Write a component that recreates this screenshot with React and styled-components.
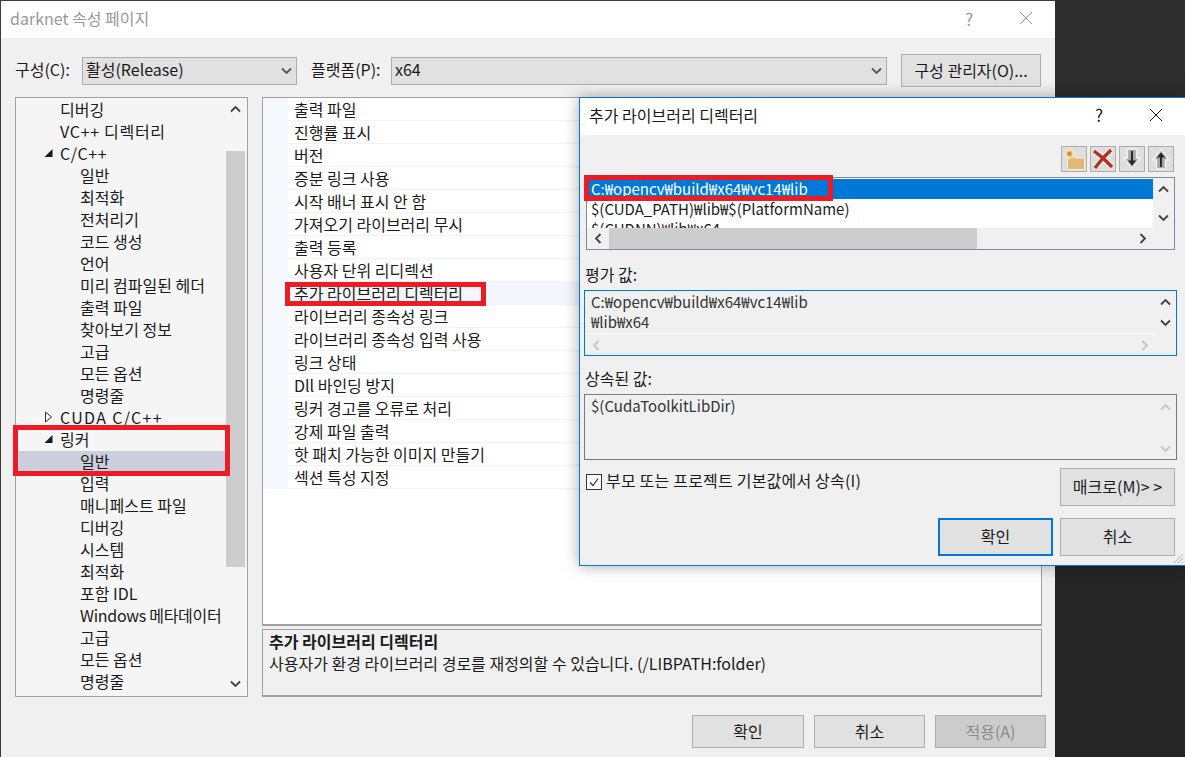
import React from 'react';
import styled, { createGlobalStyle } from 'styled-components';

const GlobalStyle = createGlobalStyle`
  * { box-sizing: border-box; }
  html, body { margin: 0; padding: 0; background: #2d2d2d; }
  body {
    font-family: "Noto Sans CJK KR", "Noto Sans", sans-serif;
    font-size: 16px;
    color: #1a1a1a;
  }
`;

const Desktop = styled.div`
  position: relative;
  width: 1185px;
  height: 757px;
  overflow: hidden;
  background: linear-gradient(#2e2e2e, #262626 70%);
`;

const Window = styled.div`
  display: flex;
  flex-direction: column;
  width: 1055px;
  height: 757px;
  background: #f0f0f0;
  border-top: 1px solid #3c3c3c;
  border-left: 1px solid #3c3c3c;
`;

const TitleBar = styled.div`
  display: flex;
  align-items: center;
  flex: none;
  height: ${p => p.$h}px;
  padding: ${p => p.$pad};
  background: #fff;
`;

const TitleText = styled.div`
  flex: 1;
  color: ${p => (p.$active ? '#1a1a1a' : '#999')};
`;

const HelpMark = styled.div`
  width: 100px;
  font-size: 17px;
  text-align: center;
  color: ${p => (p.$active ? '#1a1a1a' : '#999')};
`;

const CloseMark = styled.svg`
  display: block;
  width: 14px;
  height: 14px;
  stroke: ${p => (p.$active ? '#1a1a1a' : '#999')};
  stroke-width: 1;
  fill: none;
`;

const ConfigRow = styled.div`
  display: flex;
  align-items: center;
  height: 33px;
  margin: 16px 13px 0 14px;
`;

const ConfigLabel = styled.div`
  width: ${p => p.$w}px;
  flex: none;
  padding-bottom: 3px;
`;

const Select = styled.div`
  display: flex;
  align-items: center;
  justify-content: space-between;
  width: ${p => p.$w}px;
  height: 28px;
  margin-right: ${p => p.$mr}px;
  padding: 0 4px 3px 3px;
  background: #e1e1e1;
  border: 1px solid #adadad;

  svg {
    margin-top: 3px;
  }
`;

const Button = styled.div`
  display: flex;
  align-items: center;
  justify-content: center;
  flex: none;
  width: ${p => p.$w}px;
  height: ${p => p.$h}px;
  padding-bottom: 2px;
  background: ${p => (p.$disabled ? '#cccccc' : '#e1e1e1')};
  color: ${p => (p.$disabled ? '#8a8a8a' : '#1a1a1a')};
  border: ${p => (p.$primary ? '2px solid #0078d7' : '1px solid #adadad')};
`;

const Panels = styled.div`
  display: flex;
  gap: 14px;
  margin: 10px 0 0 14px;
  height: 600px;
`;

const Tree = styled.div`
  display: flex;
  width: 233px;
  background: #f5f5f5;
  border: 1px solid #a0a0a0;
`;

const TreeRows = styled.div`
  flex: 1;
  padding-top: 1px;
  overflow: hidden;
`;

const TreeRow = styled.div`
  display: flex;
  align-items: center;
  height: 22px;
  padding-left: ${p => (p.$level === 2 ? 64 : 44)}px;
  padding-bottom: 2px;
  letter-spacing: ${p => p.$track || 0}px;
  background: ${p => (p.$selected ? '#cccedb' : 'transparent')};
  white-space: nowrap;
`;

const Arrow = styled.svg`
  width: 9px;
  height: 12px;
  margin: 0 7px 0 -16px;
  flex: none;
`;

const TreeScroll = styled.div`
  display: flex;
  flex-direction: column;
  width: 19px;
  margin-right: 2px;
  background: #f5f5f5;
`;

const ScrollCap = styled.div`
  display: flex;
  justify-content: center;
  align-items: ${p => (p.$end ? 'flex-end' : 'flex-start')};
  flex: none;
  height: ${p => p.$size}px;
  padding: ${p => (p.$end ? '0 0 7px' : '6px 0 0')};
`;

const ScrollButton = styled.div`
  display: flex;
  align-items: center;
  justify-content: center;
  flex: none;
  width: 22px;
  height: 100%;
`;

const ScrollThumb = styled.div`
  flex: none;
  height: ${p => p.$size}px;
  background: #cdcdcd;
`;

const RightColumn = styled.div`
  display: flex;
  flex-direction: column;
  gap: 3px;
  width: 780px;
`;

const Grid = styled.div`
  flex: none;
  height: 529px;
  background: #fff;
  border: 1px solid #a0a0a0;
  border-bottom-width: 2px;
`;

const GridRow = styled.div`
  display: flex;
  height: 23px;
  background: ${p => (p.$current ? '#f3f6fb' : '#fff')};
`;

const GridGutter = styled.div`
  flex: none;
  width: 25px;
  background: #f5f8fd;
`;

const GridLabel = styled.div`
  flex: 1;
  height: 23px;
  padding-left: 6px;
  line-height: 23px;
  border-bottom: 1px solid #f1f3f8;
`;

const Description = styled.div`
  flex: none;
  height: 68px;
  padding: 0 6px;
  background: #f0f0f0;
  border: 1px solid #a0a0a0;
  border-bottom-width: 2px;
  line-height: 22px;
`;

const DescriptionTitle = styled.div`
  font-weight: 700;
`;

const FooterButtons = styled.div`
  display: flex;
  justify-content: flex-end;
  gap: 10px;
  margin: 18px 9px 0 0;
`;

const Dialog = styled.div`
  position: absolute;
  left: 579px;
  top: 97px;
  display: flex;
  flex-direction: column;
  width: 607px;
  height: 469px;
  background: #f0f0f0;
  border: 1px solid #0078d7;
  box-shadow: 0 0 14px rgba(0, 0, 0, 0.35);
`;

const DialogTools = styled.div`
  display: flex;
  justify-content: flex-end;
  gap: 3px;
  height: 26px;
  margin: 11px 11px 0 0;
`;

const ToolButton = styled.div`
  display: flex;
  align-items: center;
  justify-content: center;
  width: 26px;
  height: 26px;
  background: #dedede;
  border: 1px solid #adadad;
`;

const ListBox = styled.div`
  display: grid;
  grid-template-columns: 1fr 21px;
  grid-template-rows: 50px 21px;
  width: 589px;
  height: 73px;
  margin: 5px 0 0 6px;
  background: #f0f0f0;
  border: 1px solid #828790;
`;

const ListRows = styled.div`
  height: 50px;
  padding-top: 1px;
  overflow: hidden;
  background: #fff;
`;

const ListRow = styled.div`
  height: 20px;
  padding-left: 4px;
  font-size: 15px;
  line-height: 20px;
  white-space: nowrap;
  background: ${p => (p.$selected ? '#0078d7' : 'transparent')};
  color: ${p => (p.$selected ? '#fff' : '#1a1a1a')};
`;

const VerticalBar = styled.div`
  display: flex;
  flex-direction: column;
  align-items: center;
  gap: ${p => p.$gap}px;
  padding-top: ${p => p.$top}px;
`;

const HorizontalBar = styled.div`
  display: flex;
  align-items: center;
  height: 21px;
`;

const HorizontalThumb = styled.div`
  width: ${p => p.$size}px;
  height: 100%;
  background: #cdcdcd;
`;

const HorizontalGap = styled.div`
  flex: 1;
`;

const FieldLabel = styled.div`
  height: 20px;
  margin: ${p => p.$mt}px 0 6px 5px;
  line-height: 20px;
`;

const ValueBox = styled.div`
  display: grid;
  grid-template-columns: 1fr 22px;
  width: 593px;
  height: 66px;
  margin-left: 4px;
  background: #f0f0f0;
  border: 1px solid ${p => (p.$focused ? '#0078d7' : '#7a7a7a')};
`;

const ValueText = styled.div`
  padding: 1px 6px;
  font-size: 15px;
  line-height: 20px;
  white-space: nowrap;
  color: #333;
`;

const ValuePane = styled.div`
  display: flex;
  flex-direction: column;
`;

const ValueLines = styled.div`
  flex: 1;
  border-bottom: 1px solid #fff;
`;

const ValueScroll = styled.div`
  display: flex;
  align-items: center;
  justify-content: space-between;
  height: 22px;
  padding: 0 4px 0 6px;
`;

const OptionRow = styled.div`
  display: flex;
  justify-content: space-between;
  align-items: flex-start;
  margin: 8px 10px 0 6px;
`;

const CheckLabel = styled.div`
  display: flex;
  align-items: center;
  gap: 4px;
  height: 28px;
  padding-bottom: 4px;
  letter-spacing: 0.2px;
`;

const CheckBox = styled.span`
  display: flex;
  align-items: center;
  justify-content: center;
  width: 16px;
  height: 16px;
  margin-top: 3px;
  background: #fff;
  border: 1px solid #333;
`;

const DialogButtons = styled.div`
  display: flex;
  justify-content: flex-end;
  gap: 7px;
  margin: 12px 10px 0 0;
`;

const Grip = styled.svg`
  position: absolute;
  right: 1px;
  bottom: 1px;
  width: 12px;
  height: 12px;
  stroke: #b5b5b5;
`;

const Marker = styled.div`
  position: absolute;
  left: ${p => p.$x}px;
  top: ${p => p.$y}px;
  width: ${p => p.$w}px;
  height: ${p => p.$h}px;
  border: 5px solid #ed1c24;
`;

const Chevron = ({ dir = 'down', color = '#404040', size = 11 }) => {
  const points = {
    up: '1,7.500 5.500,3 10,7.500',
    down: '1,3.500 5.500,8 10,3.500',
    left: '7.500,1 3,5.500 7.500,10',
    right: '3.500,1 8,5.500 3.500,10',
  }[dir];
  return (
    <svg width={size} height={size} viewBox="0 0 11 11" style={{ flex: 'none' }}>
      <polyline points={points} fill="none" stroke={color} strokeWidth="1.8" />
    </svg>
  );
};

const FolderIcon = () => (
  <svg width="24" height="24" viewBox="0 0 24 24">
    <path d="M5.500 8.500h6l2 2.500h9v11.500h-17z" fill="#e0b877" stroke="#f8f0e0" strokeWidth="1" />
    <path d="M7.500 1l1.100 2.900 2.900-1.100-1.100 2.900 2.900 1.100-2.900 1.100 1.100 2.900-2.900-1.100-1.100 2.900-1.100-2.900-2.900 1.100 1.100-2.900-2.900-1.100 2.900-1.100-1.100-2.900 2.900 1.100z" fill="#f2cd86" stroke="#fff6e6" strokeWidth="0.600" />
    <circle cx="7.500" cy="6.800" r="2.300" fill="#d88f2a" />
  </svg>
);

const DeleteIcon = () => (
  <svg width="24" height="24" viewBox="0 0 24 24">
    <path d="M3 4l9 7 8-8M4 21l8-10 9 9" fill="none" stroke="#f4f4f4" strokeWidth="5.500" />
    <path d="M3 4l9 7 8-8M4 21l8-10 9 9" fill="none" stroke="#b3301c" strokeWidth="3.400" />
  </svg>
);

const MoveIcon = ({ up }) => (
  <svg width="24" height="24" viewBox="0 0 24 24">
    <g transform={up ? 'rotate(180 12 12)' : undefined}>
      <path d="M7.500 2h9v9h3.500l-8 10.500-8-10.500h3.500z" fill="#a8a8a8" stroke="#f4f4f4" strokeWidth="1.300" />
      <path d="M11 4h2v9.500h3.200l-4.200 5-4.200-5h3.200z" fill="#2a2a2a" />
    </g>
  </svg>
);

const TreeArrow = ({ open }) => (
  <Arrow viewBox="0 0 9 12">
    {open ? (
      <path d="M0.500 10L8.500 2v8z" fill="#1a1a1a" />
    ) : (
      <path d="M1.500 1l6 5-6 5z" fill="none" stroke="#333" />
    )}
  </Arrow>
);

const treeItems = [
  { label: '디버깅' },
  { label: 'VC++ 디렉터리', track: 0.7 },
  { label: 'C/C++', open: true, track: 0.6 },
  { label: '일반', level: 2 },
  { label: '최적화', level: 2 },
  { label: '전처리기', level: 2 },
  { label: '코드 생성', level: 2 },
  { label: '언어', level: 2 },
  { label: '미리 컴파일된 헤더', level: 2 },
  { label: '출력 파일', level: 2 },
  { label: '찾아보기 정보', level: 2 },
  { label: '고급', level: 2 },
  { label: '모든 옵션', level: 2 },
  { label: '명령줄', level: 2 },
  { label: 'CUDA C/C++', open: false, track: 1.3 },
  { label: '링커', open: true },
  { label: '일반', level: 2, selected: true },
  { label: '입력', level: 2 },
  { label: '매니페스트 파일', level: 2 },
  { label: '디버깅', level: 2 },
  { label: '시스템', level: 2 },
  { label: '최적화', level: 2 },
  { label: '포함 IDL', level: 2 },
  { label: 'Windows 메타데이터', level: 2, track: -0.3 },
  { label: '고급', level: 2 },
  { label: '모든 옵션', level: 2 },
  { label: '명령줄', level: 2 },
];

const gridItems = [
  '출력 파일',
  '진행률 표시',
  '버전',
  '증분 링크 사용',
  '시작 배너 표시 안 함',
  '가져오기 라이브러리 무시',
  '출력 등록',
  '사용자 단위 리디렉션',
  '추가 라이브러리 디렉터리',
  '라이브러리 종속성 링크',
  '라이브러리 종속성 입력 사용',
  '링크 상태',
  'Dll 바인딩 방지',
  '링커 경고를 오류로 처리',
  '강제 파일 출력',
  '핫 패치 가능한 이미지 만들기',
  '섹션 특성 지정',
];

const App = () => {
  return (
    <Desktop>
      <GlobalStyle />
      <Window>
        <TitleBar $h={37} $pad="0 22px 3px 9px">
          <TitleText>darknet 속성 페이지</TitleText>
          <HelpMark>?</HelpMark>
          <CloseMark viewBox="0 0 14 14">
            <path d="M1 1l12 12M13 1L1 13" />
          </CloseMark>
        </TitleBar>
        <ConfigRow>
          <ConfigLabel $w={67}>구성(C):</ConfigLabel>
          <Select $w={215} $mr={14}>
            활성(Release)
            <Chevron color="#555" />
          </Select>
          <ConfigLabel $w={80}>플랫폼(P):</ConfigLabel>
          <Select $w={496} $mr={14}>
            x64
            <Chevron color="#555" />
          </Select>
          <Button $w={140} $h={33}>구성 관리자(O)...</Button>
        </ConfigRow>
        <Panels>
          <Tree>
            <TreeRows>
              {treeItems.map((item, i) => (
                <TreeRow key={i} $level={item.level} $selected={item.selected} $track={item.track}>
                  {item.open !== undefined && <TreeArrow open={item.open} />}
                  {item.label}
                </TreeRow>
              ))}
            </TreeRows>
            <TreeScroll>
              <ScrollCap $size={53}><Chevron dir="up" /></ScrollCap>
              <ScrollThumb $size={416} />
              <ScrollCap $end $size={129}><Chevron /></ScrollCap>
            </TreeScroll>
          </Tree>
          <RightColumn>
            <Grid>
              {gridItems.map((label, i) => (
                <GridRow key={label} $current={i === 8}>
                  <GridGutter />
                  <GridLabel>{label}</GridLabel>
                </GridRow>
              ))}
            </Grid>
            <Description>
              <DescriptionTitle>추가 라이브러리 디렉터리</DescriptionTitle>
              사용자가 환경 라이브러리 경로를 재정의할 수 있습니다. (/LIBPATH:folder)
            </Description>
          </RightColumn>
        </Panels>
        <FooterButtons>
          <Button $w={112} $h={33}>확인</Button>
          <Button $w={111} $h={33}>취소</Button>
          <Button $w={111} $h={33} $disabled>적용(A)</Button>
        </FooterButtons>
      </Window>

      <Dialog>
        <TitleBar $h={37} $pad="0 22px 4px 9px">
          <TitleText $active>추가 라이브러리 디렉터리</TitleText>
          <HelpMark $active>?</HelpMark>
          <CloseMark $active viewBox="0 0 14 14">
            <path d="M1 1l12 12M13 1L1 13" />
          </CloseMark>
        </TitleBar>
        <DialogTools>
          <ToolButton><FolderIcon /></ToolButton>
          <ToolButton><DeleteIcon /></ToolButton>
          <ToolButton><MoveIcon /></ToolButton>
          <ToolButton><MoveIcon up /></ToolButton>
        </DialogTools>
        <ListBox>
          <ListRows>
            <ListRow $selected>C:₩opencv₩build₩x64₩vc14₩lib</ListRow>
            <ListRow>$(CUDA_PATH)₩lib₩$(PlatformName)</ListRow>
            <ListRow>$(CUDNN)₩lib₩x64</ListRow>
          </ListRows>
          <VerticalBar $top={6} $gap={17}>
            <Chevron dir="up" />
            <Chevron />
          </VerticalBar>
          <HorizontalBar>
            <ScrollButton><Chevron dir="left" /></ScrollButton>
            <HorizontalThumb $size={368} />
            <HorizontalGap />
            <ScrollButton><Chevron dir="right" /></ScrollButton>
          </HorizontalBar>
        </ListBox>
        <FieldLabel $mt={14}>평가 값:</FieldLabel>
        <ValueBox $focused>
          <ValuePane>
            <ValueLines>
              <ValueText>C:₩opencv₩build₩x64₩vc14₩lib<br />₩lib₩x64</ValueText>
            </ValueLines>
            <ValueScroll>
              <Chevron dir="left" color="#c4c4c4" />
              <Chevron dir="right" color="#c4c4c4" />
            </ValueScroll>
          </ValuePane>
          <VerticalBar $top={6} $gap={9}>
            <Chevron dir="up" />
            <Chevron />
          </VerticalBar>
        </ValueBox>
        <FieldLabel $mt={12}>상속된 값:</FieldLabel>
        <ValueBox>
          <ValueText>$(CudaToolkitLibDir)</ValueText>
          <VerticalBar $top={7} $gap={30}>
            <Chevron dir="up" color="#c4c4c4" />
            <Chevron color="#c4c4c4" />
          </VerticalBar>
        </ValueBox>
        <OptionRow>
          <CheckLabel>
            <CheckBox>
              <svg width="12" height="12" viewBox="0 0 12 12">
                <path d="M2 6.500l3 3 5-7" fill="none" stroke="#333" strokeWidth="1.200" />
              </svg>
            </CheckBox>
            부모 또는 프로젝트 기본값에서 상속(I)
          </CheckLabel>
          <Button $w={115} $h={38}>매크로(M)&gt; &gt;</Button>
        </OptionRow>
        <DialogButtons>
          <Button $primary $w={115} $h={38}>확인</Button>
          <Button $w={115} $h={38}>취소</Button>
        </DialogButtons>
        <Grip viewBox="0 0 12 12">
          <path d="M11 2L2 11M11 6l-5 5M11 10l-1 1" />
        </Grip>
      </Dialog>

      <Marker $x={13} $y={425} $w={217} $h={51} />
      <Marker $x={285} $y={282} $w={201} $h={24} />
      <Marker $x={584} $y={175} $w={249} $h={26} />
    </Desktop>
  );
};

export default App;
